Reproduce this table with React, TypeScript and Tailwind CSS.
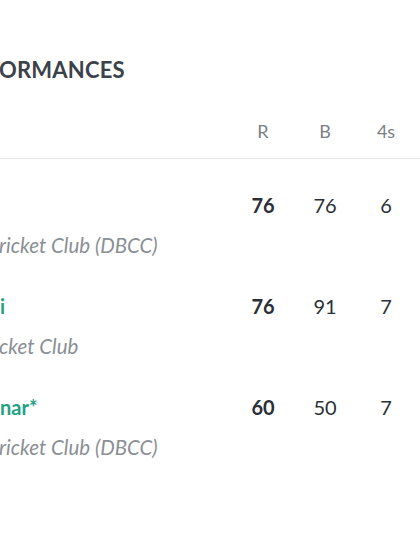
const rows = [
  { name: "", club: "ricket Club (DBCC)", r: "76", b: "76", fours: "6" },
  { name: "i", club: "cket Club", r: "76", b: "91", fours: "7" },
  { name: "nar*", club: "ricket Club (DBCC)", r: "60", b: "50", fours: "7" },
];

export default function App() {
  return (
    <div className="h-[560px] w-[420px] overflow-hidden bg-white font-['Lato','Open_Sans',sans-serif]">
      <h2 className="pt-14 text-[22px] leading-7 font-bold tracking-[0.2px] text-[#3b4249] -ml-px">
        ORMANCES
      </h2>

      <div className="mt-[35px] flex pb-[15px] text-[18px] leading-6 text-[#7a7f84]">
        <div className="flex-1" />
        <div className="w-[62px] text-center">R</div>
        <div className="w-[62px] text-center">B</div>
        <div className="w-[60px] text-center">4s</div>
        <div className="w-[4px]" />
      </div>

      <div className="h-px bg-[#e6e8ea]" />

      {rows.map((row, i) => (
        <div key={i} className="pt-[34px] pb-px">
          <div className="flex text-[20px] leading-6 text-[#2b3036]">
            <div className="flex-1 font-bold text-[#23a184]">{row.name}</div>
            <div className="w-[62px] text-center font-bold">{row.r}</div>
            <div className="w-[62px] text-center">{row.b}</div>
            <div className="w-[60px] text-center">{row.fours}</div>
            <div className="w-[4px]" />
          </div>
          <div className="mt-[14px] text-[20.5px] leading-7 italic text-[#8a8f94] -ml-px">
            {row.club}
          </div>
        </div>
      ))}
    </div>
  );
}
